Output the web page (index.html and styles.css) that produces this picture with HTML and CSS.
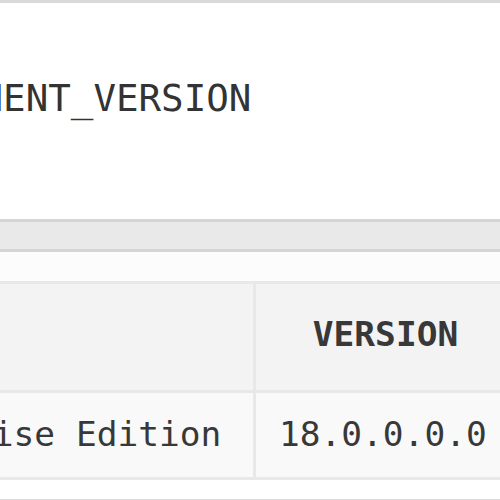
FILE: index.html
```html
<!DOCTYPE html>
<html>
<head>
<meta charset="utf-8">
<link rel="stylesheet" href="styles.css">
</head>
<body>
<div class="page">
  <div class="frame-top"></div>
  <div class="code"><span class="code-text">PRODUCT_COMPONENT_VERSION</span></div>
  <div class="hscroll"></div>
  <div class="gap"></div>
  <table class="result">
    <thead>
      <tr><th class="c1">PRODUCT</th><th class="c2">VERSION</th></tr>
    </thead>
    <tbody>
      <tr><td class="c1">Oracle Database 18c Enterprise Edition</td><td class="c2">18.0.0.0.0</td></tr>
    </tbody>
  </table>
  <div class="after"></div>
  <div class="frame-bottom"></div>
</div>
</body>
</html>
```
FILE: styles.css
```css
html, body {
  margin: 0;
  padding: 0;
  background: #ffffff;
  overflow: hidden;
}
.page {
  width: 500px;
  height: 500px;
  overflow: hidden;
  display: flex;
  flex-direction: column;
  font-family: "DejaVu Sans Mono", monospace;
  color: #383838;
}
.frame-top {
  height: 3px;
  background: #d9d9d9;
  flex: none;
}
.code {
  flex: none;
  height: 216px;
  box-sizing: border-box;
  padding-top: 74px;
  white-space: nowrap;
}
.code-text {
  display: block;
  margin-left: -313px;
  font-size: 37.5px;
  line-height: 43px;
  color: #333333;
}
.hscroll {
  flex: none;
  height: 27px;
  background: #e9e9e9;
  border-top: 3px solid #d5d5d5;
  border-bottom: 3px solid #d5d5d5;
}
.gap {
  flex: none;
  height: 29px;
  background: #fcfcfc;
}
.result {
  flex: none;
  align-self: flex-start;
  width: 1110px;
  table-layout: fixed;
  border-collapse: collapse;
  margin-left: -595px;
  font-size: 34.5px;
  line-height: 41px;
  white-space: nowrap;
}
.result th, .result td {
  border: 3px solid #e8e8e8;
  box-sizing: border-box;
}
.result th {
  background: #f3f3f3;
  font-weight: bold;
  text-align: center;
  padding: 30px 0 35px;
  color: #383838;
}
.result td {
  background: #f9f9f9;
  text-align: left;
  padding: 21px 32px 22px 24px;
}
.result .c1 {
  width: 848px;
}
.result .c2 {
  width: 262px;
}
.result td.c2 {
  padding-left: 23px;
  padding-right: 0;
}
.after {
  flex: none;
  height: 19px;
  background: #ffffff;
}
.frame-bottom {
  flex: none;
  height: 4px;
  background: #d9d9d9;
}
```
